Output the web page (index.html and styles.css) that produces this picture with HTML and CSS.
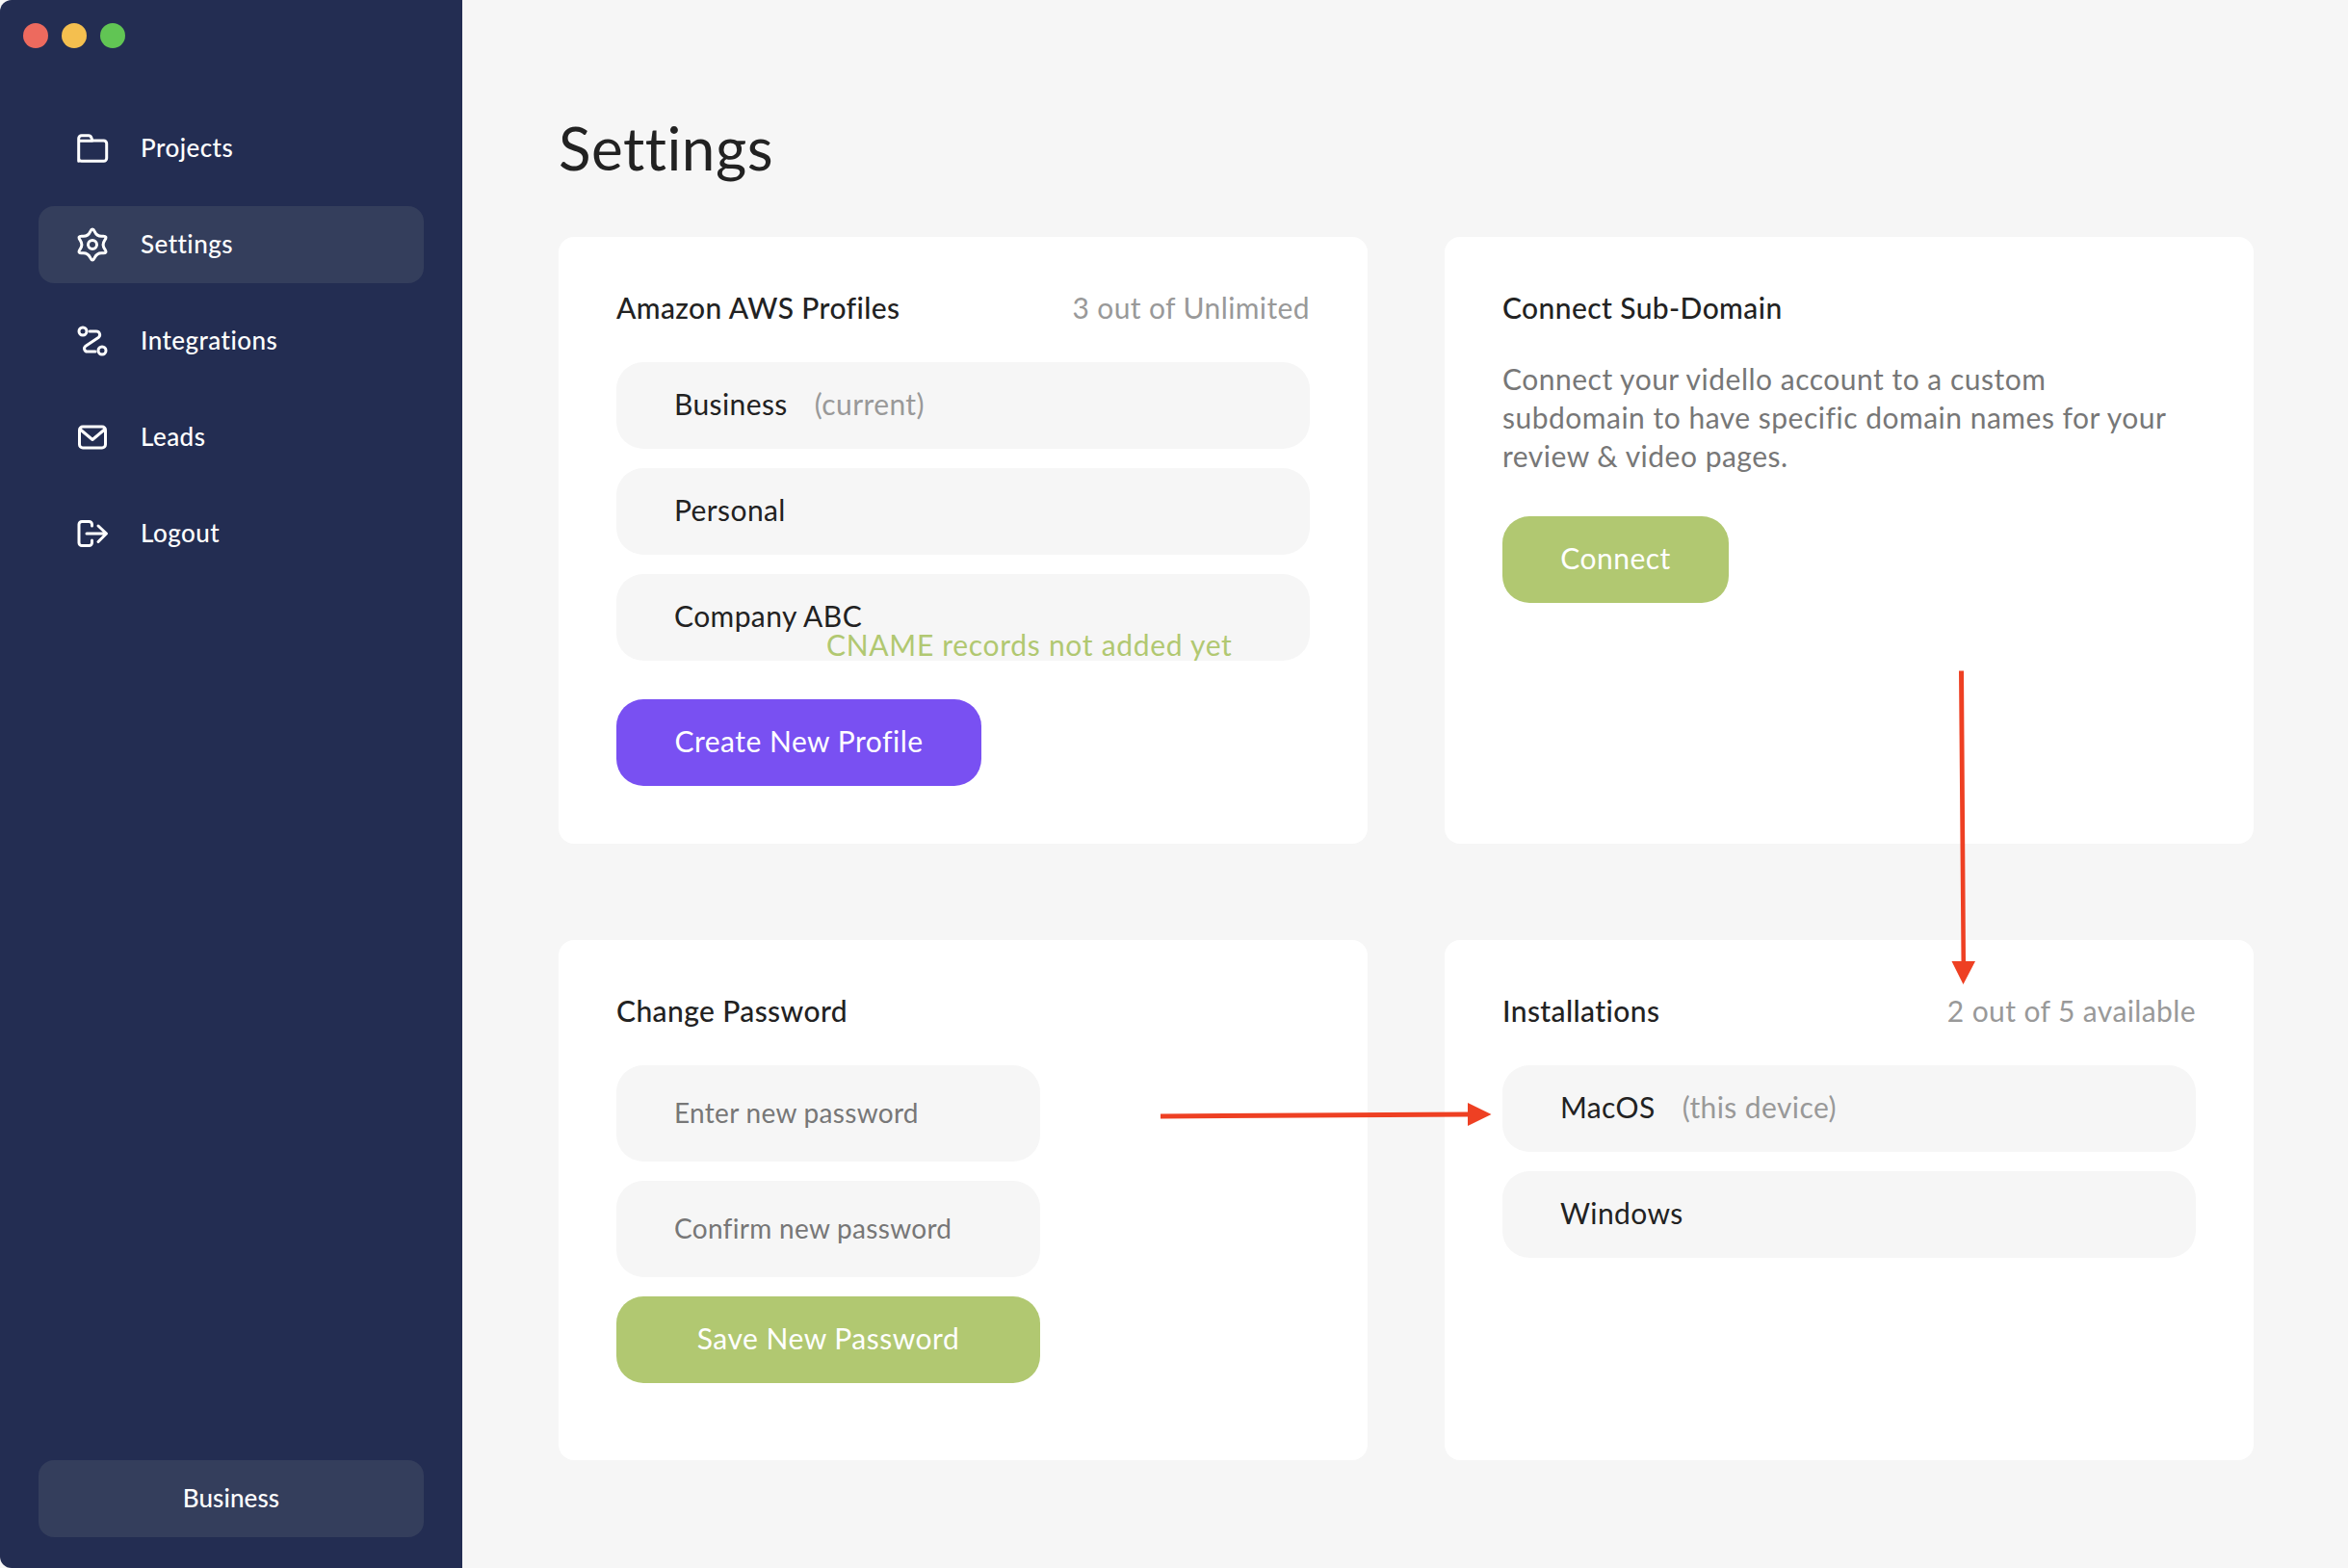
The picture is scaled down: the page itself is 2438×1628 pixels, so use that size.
FILE: index.html
```html
<!DOCTYPE html>
<html lang="en">
<head>
<meta charset="utf-8">
<title>Settings</title>
<link rel="stylesheet" href="styles.css">
</head>
<body>
<div class="app">
  <aside class="sidebar">
    <div class="lights"><span class="light red"></span><span class="light yellow"></span><span class="light green"></span></div>
    <nav class="nav">
      <a class="nav-item"><svg class="icon" viewBox="0 0 36 36"><path d="M3.7 32.3V8.7a3 3 0 0 1 3-3H14a3 3 0 0 1 2.8 2l1.2 3.3H29.7a3 3 0 0 1 3 3V29.3a3 3 0 0 1-3 3H6.7a3 3 0 0 1-3-3V11.2H18"/></svg>Projects</a>
      <a class="nav-item active"><svg class="icon" viewBox="0 0 36 36"><path d="M15.625 5.635Q18 0.5 20.375 5.635Q22.75 10.77 28.385 10.26Q34.02 9.75 30.76 14.375Q27.5 19 30.76 23.625Q34.02 28.25 28.385 27.74Q22.75 27.23 20.375 32.365Q18 37.5 15.625 32.365Q13.25 27.23 7.615 27.74Q1.98 28.25 5.24 23.625Q8.5 19 5.24 14.375Q1.98 9.75 7.615 10.26Q13.25 10.77 15.625 5.635Z"/><circle cx="18" cy="19" r="4.5"/></svg>Settings</a>
      <a class="nav-item"><svg class="icon" viewBox="0 0 36 36"><circle cx="8" cy="9" r="4"/><circle cx="28" cy="29" r="4"/><path d="M15 9H22a3.6 3.6 0 0 1 2.5 6.2L10.6 24.6a3.1 3.1 0 0 0 2.2 5.4H21"/></svg>Integrations</a>
      <a class="nav-item"><svg class="icon" viewBox="0 0 36 36"><rect x="4.5" y="8" width="27" height="22" rx="3.5"/><path d="M5.500 11L18 21.5L30.5 11"/></svg>Leads</a>
      <a class="nav-item"><svg class="icon" viewBox="0 0 36 36"><path d="M17.5 11V9.5a3 3 0 0 0-3-3H7a3 3 0 0 0-3 3V28.5a3 3 0 0 0 3 3H14.5a3 3 0 0 0 3-3V26M12 19H32M24 11L32.5 19L24 27.5"/></svg>Logout</a>
    </nav>
    <div class="account">Business</div>
  </aside>
  <main class="main">
    <h1 class="page-title">Settings</h1>
    <div class="cards">
      <section class="card">
        <div class="card-head"><h2 class="card-title">Amazon AWS Profiles</h2><span class="muted">3 out of Unlimited</span></div>
        <div class="rows">
          <div class="row"><span class="row-name">Business</span><span class="muted">(current)</span></div>
          <div class="row"><span class="row-name">Personal</span></div>
          <div class="row"><span class="row-name">Company ABC</span><span class="cname">CNAME records not added yet</span></div>
        </div>
        <button class="btn btn-purple btn-profile">Create New Profile</button>
      </section>
      <section class="card">
        <div class="card-head"><h2 class="card-title">Connect Sub-Domain</h2></div>
        <p class="desc">Connect your vidello account to a custom<br>subdomain to have specific domain names for your<br>review &amp; video pages.</p>
        <button class="btn btn-green btn-connect">Connect</button>
      </section>
      <section class="card">
        <div class="card-head"><h2 class="card-title">Change Password</h2></div>
        <div class="form">
          <div class="field">Enter new password</div>
          <div class="field">Confirm new password</div>
          <button class="btn btn-green">Save New Password</button>
        </div>
      </section>
      <section class="card">
        <div class="card-head"><h2 class="card-title">Installations</h2><span class="muted">2 out of 5 available</span></div>
        <div class="rows">
          <div class="row"><span class="row-name">MacOS</span><span class="muted">(this device)</span></div>
          <div class="row"><span class="row-name">Windows</span></div>
        </div>
      </section>
    </div>
  </main>
</div>
<svg class="annotations" viewBox="0 0 2438 1628">
  <path d="M2034 696.500L2039 696.500L2041 998L2051 998L2038.500 1022L2026.500 998L2036.500 998Z"/>
  <path d="M1205 1156.500L1524 1154.500V1145L1548.500 1157L1524 1169V1159.500L1205 1161.500Z"/>
</svg>
</body>
</html>
```
FILE: styles.css
```css
* { box-sizing: border-box; }
html, body { margin: 0; padding: 0; }
body {
  width: 2438px;
  height: 1628px;
  overflow: hidden;
  background: #f6f6f6;
  font-family: "Lato", "Liberation Sans", sans-serif;
  color: #222;
  position: relative;
}
.app { display: flex; height: 100%; }

.sidebar {
  width: 480px;
  flex: none;
  background: #232d52;
  border-radius: 12px 0 0 12px;
  padding: 24px 40px 32px;
  display: flex;
  flex-direction: column;
}
.lights { display: flex; gap: 14px; margin-left: -16px; height: 26px; }
.light { width: 26px; height: 26px; border-radius: 50%; }
.red { background: #ed6a5e; }
.yellow { background: #f4bf4f; }
.green { background: #61c554; }

.nav { display: flex; flex-direction: column; gap: 20px; margin-top: 64px; flex: 1; }
.nav-item {
  height: 80px;
  display: flex;
  align-items: center;
  padding: 0 0 2px 38px;
  gap: 32px;
  border-radius: 16px;
  color: #fff;
  font-size: 26px;
  font-weight: 500;
  letter-spacing: 0.45px;
}
.nav-item.active { background: #343e5c; }
.icon {
  width: 36px;
  height: 36px;
  flex: none;
  overflow: visible;
  fill: none;
  stroke: #fff;
  stroke-width: 3;
  stroke-linecap: round;
  stroke-linejoin: round;
}
.account {
  height: 80px;
  display: flex;
  align-items: center;
  justify-content: center;
  padding-bottom: 2px;
  border-radius: 16px;
  background: #343e5c;
  color: #fff;
  font-size: 26px;
  font-weight: 500;
  letter-spacing: 0.1px;
}

.main { flex: 1; padding: 0 98px 0 100px; }
.page-title {
  margin: 0;
  height: 246px;
  padding-top: 113px;
  font-size: 62px;
  line-height: 80px;
  font-weight: 400;
  letter-spacing: 0.5px;
  color: #222;
}
.cards {
  display: grid;
  grid-template-columns: 840px 840px;
  grid-template-rows: 630px 540px;
  column-gap: 80px;
  row-gap: 100px;
}
.card { background: #fff; border-radius: 16px; padding: 52.5px 60px 0; }
.card-head {
  height: 40px;
  display: flex;
  justify-content: space-between;
  align-items: center;
  margin-bottom: 37.5px;
}
.card-title { margin: 0; font-size: 30px; font-weight: 500; letter-spacing: 0.4px; color: #222; }
.muted { color: #999; font-size: 30px; letter-spacing: 0.4px; }

.rows { display: flex; flex-direction: column; gap: 20px; }
.row {
  height: 90px;
  display: flex;
  align-items: center;
  gap: 28px;
  padding: 0 60px 4px;
  border-radius: 28px;
  background: #f6f6f6;
  position: relative;
}
.row-name { font-size: 30px; letter-spacing: 0.4px; color: #222; }
.cname {
  position: absolute;
  left: 218px;
  top: 53px;
  font-size: 30px;
  line-height: 40px;
  letter-spacing: 0.7px;
  color: #b1c871;
  white-space: nowrap;
}

.btn {
  height: 90px;
  border: 0;
  border-radius: 28px;
  padding: 0 0 4px;
  font-family: inherit;
  font-size: 30px;
  letter-spacing: 0.5px;
  color: #fff;
  display: flex;
  align-items: center;
  justify-content: center;
}
.btn-purple { background: #7950f2; }
.btn-green { background: #b1c871; }
.btn-profile { width: 379px; margin-top: 40px; }
.btn-connect { width: 235px; }

.desc {
  margin: -3px 0 43px;
  font-size: 30px;
  line-height: 40px;
  letter-spacing: 0.5px;
  color: #777;
}
.form { width: 440px; display: flex; flex-direction: column; gap: 20px; }
.field {
  height: 100px;
  display: flex;
  align-items: center;
  padding: 0 60px 3px;
  border-radius: 28px;
  background: #f6f6f6;
  color: #777;
  font-size: 28px;
  letter-spacing: 0.3px;
}

.annotations {
  position: absolute;
  left: 0;
  top: 0;
  width: 2438px;
  height: 1628px;
  pointer-events: none;
  fill: #ee4023;
}
```
